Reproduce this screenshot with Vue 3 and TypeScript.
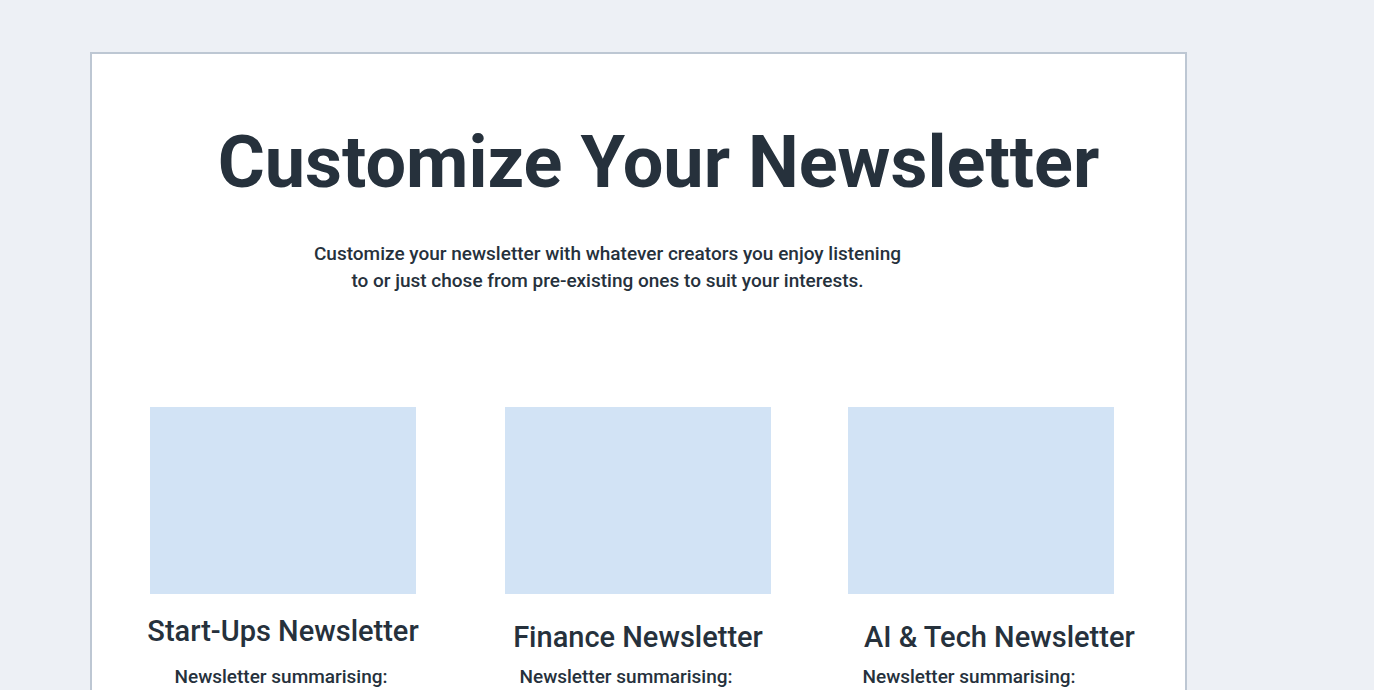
<script setup lang="ts">
interface Newsletter {
  title: string
  slug: string
}

const newsletters: Newsletter[] = [
  { title: 'Start-Ups Newsletter', slug: 'startups' },
  { title: 'Finance Newsletter', slug: 'finance' },
  { title: 'AI & Tech Newsletter', slug: 'tech' },
]
</script>

<template>
  <main class="canvas">
    <section class="frame">
      <h1>Customize Your Newsletter</h1>
      <p class="intro">
        Customize your newsletter with whatever creators you enjoy listening<br />
        to or just chose from pre-existing ones to suit your interests.
      </p>
      <div class="cards">
        <article v-for="item in newsletters" :key="item.slug" class="card" :class="item.slug">
          <div class="thumb"></div>
          <h2>{{ item.title }}</h2>
          <p>Newsletter summarising:</p>
        </article>
      </div>
    </section>
  </main>
</template>

<style>
body {
  background: #edf0f5;
}
</style>

<style scoped>
.canvas {
  box-sizing: border-box;
  height: 100vh;
  overflow: hidden;
  padding: 52px 187px 0 90px;
  font-family: Roboto, "Liberation Sans", sans-serif;
  color: #26313c;
}
.frame {
  box-sizing: border-box;
  min-height: 100%;
  padding: 65px 52px 80px;
  background: #fff;
  border: 2px solid #bdc7d3;
}
h1,
h2,
p {
  margin: 0;
  white-space: nowrap;
}
h1 {
  padding-left: 40px;
  text-align: center;
  font-size: 72px;
  line-height: 88px;
  font-weight: 700;
}
.intro {
  margin-top: 33px;
  padding-right: 62px;
  text-align: center;
  font-size: 19px;
  line-height: 27px;
  font-weight: 500;
}
.cards {
  display: grid;
  grid-template-columns: 355fr 343fr 291fr;
  margin-top: 113px;
}
.card {
  display: grid;
  grid-template-columns: 278px;
  justify-items: center;
  align-content: start;
}
.thumb {
  width: 266px;
  height: 187px;
  background: #d2e3f5;
}
h2 {
  margin-top: 19px;
  font-size: 29px;
  line-height: 36px;
  font-weight: 500;
}
.card p {
  margin-top: 16px;
  padding-right: 4px;
  font-size: 19px;
  line-height: 24px;
  font-weight: 500;
}
.finance h2,
.tech h2 {
  margin-top: 25px;
}
.tech h2 {
  padding-left: 22px;
  justify-self: start;
}
.card.finance p,
.card.tech p {
  margin-top: 10px;
  padding-right: 24px;
}
</style>
